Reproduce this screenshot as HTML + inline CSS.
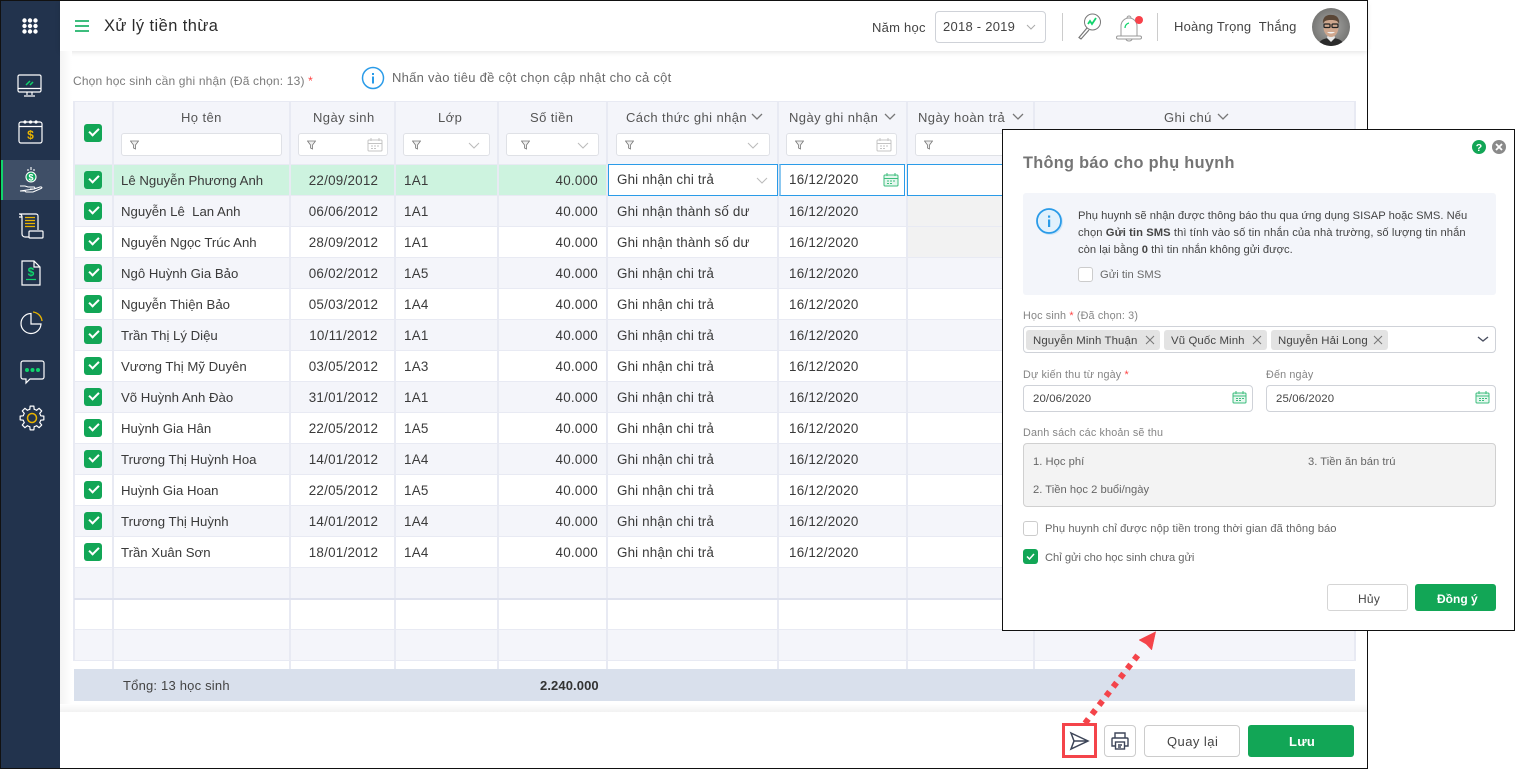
<!DOCTYPE html>
<html lang="vi"><head><meta charset="utf-8"><title>Xử lý tiền thừa</title>
<style>
html,body{margin:0;padding:0;background:#fff}
#p{position:relative;width:1515px;height:769px;overflow:hidden;background:#fff;font-family:"Liberation Sans","DejaVu Sans",sans-serif;font-size:13px;color:#333}
.a{position:absolute;box-sizing:border-box}
.t{position:absolute;white-space:pre;height:20px;line-height:20px;letter-spacing:.25px}
table{position:absolute;left:73px;top:101px;border-collapse:collapse;table-layout:fixed;width:1281px}
td,th{border:1px solid #e8eaf3;border-width:1px 2px;padding:0 8px;height:31px;box-sizing:border-box;white-space:pre;font-weight:400;font-size:13.4px;letter-spacing:.25px;color:#3a3a3a;overflow:hidden}
tr:nth-child(odd) td{background:#f4f5fa}
tr.o td{background:#fff}
td.r{text-align:right}td.c{text-align:center;padding:0}
td.d{padding-left:10px}
td:nth-child(1){padding-right:2px}
td:nth-child(2){padding-left:7px;font-size:13.2px;letter-spacing:0}
td:nth-child(3){padding-left:2px}
td:nth-child(6){padding-left:9px;letter-spacing:.15px}
.ck{display:inline-block;width:18px;height:18px;background:#12a656;border-radius:3px;vertical-align:middle;position:relative}
.ck:after{content:"";position:absolute;left:5px;top:4px;width:8px;height:4px;border:solid #fff;border-width:0 0 2px 2px;transform:rotate(-45deg)}
.box{position:absolute;background:#fff;border:1px solid #dfe1e6;border-radius:3px;box-sizing:border-box;height:23px;top:133px}
.m{font-size:11.4px;color:#444;letter-spacing:.12px;transform:translateY(1px)}
.pp{font-size:11.2px;color:#444;letter-spacing:.02px;transform:translateY(1px)}
.lb{font-size:10.8px;color:#858585;letter-spacing:.15px;transform:translateY(1px)}
.hd{color:#555;letter-spacing:.42px;top:108px}
.inp{position:absolute;background:#fff;border:1px solid #cfd2d8;border-radius:4px;box-sizing:border-box}
.tag{position:absolute;top:330px;height:20px;background:#e3e3e3;border-radius:3px}
</style></head><body><div id="p">

<!-- sidebar -->
<div class="a" style="left:0;top:0;width:60px;height:769px;background:#22334d"></div>
<div class="a" style="left:1px;top:160px;width:59px;height:40px;background:#3f4f67"></div>
<div class="a" style="left:1px;top:160px;width:2px;height:40px;background:#10d46c"></div>

<!-- header -->
<div class="a" style="left:60px;top:1px;width:1307px;height:50px;background:#fff;box-shadow:0 1px 5px rgba(0,0,0,.12)"></div>
<div class="a" style="left:60px;top:51px;width:12px;height:661px;background:linear-gradient(90deg,#f4f4f4,#fff)"></div>
<div class="a" style="left:60px;top:704px;width:1307px;height:8px;background:linear-gradient(180deg,#fff,#f2f2f2)"></div>
<div class="a" style="left:75px;top:20px;width:14px;height:2px;background:#3dbd7d;box-shadow:0 5px 0 #3dbd7d,0 10px 0 #3dbd7d"></div>
<div class="t" style="left:104px;top:16px;font-size:16.4px;color:#2b2b2b;letter-spacing:.45px">Xử lý tiền thừa</div>
<div class="t" style="left:872px;top:18px;color:#444;font-size:13px">Năm học</div>
<div class="inp" style="left:935px;top:11px;width:111px;height:32px"></div>
<div class="t" style="left:943px;top:17px;color:#444;font-size:13px">2018 - 2019</div>
<svg class="a" style="left:1026px;top:24px" width="10" height="6"><path d="M1 1l4 4 4-4" fill="none" stroke="#aaa"/></svg>
<div class="a" style="left:1062px;top:13px;width:1px;height:28px;background:#ccc"></div>
<div class="a" style="left:1157px;top:13px;width:1px;height:28px;background:#ccc"></div>
<svg class="a" style="left:1076px;top:12px" width="28" height="30" fill="none"><circle cx="16.500" cy="10" r="8" stroke="#777"/><path d="M11 16L3 25.500l2 1.500 8-9" stroke="#777" stroke-width="1.200"/><path d="M12 12l2-3 2 3 4-6" stroke="#10d46c" stroke-width="1.800"/></svg>
<svg class="a" style="left:1115px;top:12px" width="30" height="30" fill="none"><path d="M6 24V14a8 8 0 0 1 16 0v10M3 24h22a1 1 0 0 1 0 3H3a1 1 0 0 1 0-3zM12 6a2 2 0 0 1 4 0M11 27a3 2 0 0 0 6 0" stroke="#999"/><path d="M10 16a5 5 0 0 1 4-5" stroke="#10d46c" stroke-width="1.300"/><circle cx="24" cy="8" r="4" fill="#f8414a"/></svg>
<div class="t" style="left:1174px;top:17px;color:#444;font-size:13px;letter-spacing:.2px">Hoàng Trọng  Thắng</div>
<svg class="a" style="left:1312px;top:8px" width="38" height="38"><defs><clipPath id="av"><circle cx="19" cy="19" r="19"/></clipPath><radialGradient id="bgv"><stop offset="0" stop-color="#a8a8a6"/><stop offset="1" stop-color="#777775"/></radialGradient></defs><g clip-path="url(#av)"><rect width="38" height="38" fill="url(#bgv)"/><path d="M6 38c1-6 6-8 13-8s12 2 13 8z" fill="#2b2b2b"/><path d="M15 30l4 4 4-4-1-4h-6z" fill="#e8e8e8"/><ellipse cx="19" cy="19" rx="7.500" ry="10" fill="#cfa78e"/><path d="M11 16c-1-7 4-10 9-9 5 0 8 4 7 9-1-3-3-4-8-4s-7 1-8 4z" fill="#5a4636"/><rect x="12" y="16" width="6" height="3.500" rx="1" fill="none" stroke="#222" stroke-width="1.200"/><rect x="20" y="16" width="6" height="3.500" rx="1" fill="none" stroke="#222" stroke-width="1.200"/><path d="M15 24c2 2 6 2 8 0z" fill="#f4f4f4"/></g></svg>

<!-- sub header -->
<div class="t" style="left:73px;top:71px;font-size:12px;color:#7b7b7b;letter-spacing:.17px">Chọn học sinh cần ghi nhận (Đã chọn: 13) <span style="color:#f44">*</span></div>
<svg class="a" style="left:361px;top:66px" width="24" height="24"><circle cx="12" cy="12" r="10.500" fill="#fff" stroke="#2a9be8" stroke-width="1.500"/><rect x="11" y="10.500" width="2" height="7" fill="#2a9be8"/><rect x="11" y="7" width="2" height="2" fill="#2a9be8"/></svg>
<div class="t" style="left:392px;top:68px;font-size:13px;color:#6a6a6a;letter-spacing:.27px">Nhấn vào tiêu đề cột chọn cập nhật cho cả cột</div>

<!-- table -->
<table>
<colgroup><col style="width:39px"><col style="width:177px"><col style="width:105px"><col style="width:103px"><col style="width:109px"><col style="width:171px"><col style="width:129px"><col style="width:127px"><col style="width:321px"></colgroup>
<tbody>
<tr style="height:63px"><td style="background:#f4f5fa;height:63px" class="c"><span class="ck"></span></td><td style="background:#f4f5fa"></td><td style="background:#f4f5fa"></td><td style="background:#f4f5fa"></td><td style="background:#f4f5fa"></td><td style="background:#f4f5fa"></td><td style="background:#f4f5fa"></td><td style="background:#f4f5fa"></td><td style="background:#f4f5fa"></td></tr>
<tr class="o"><td class="c" style="background:#cdf3df"><span class="ck"></span></td><td style="background:#cdf3df">Lê Nguyễn Phương Anh</td><td class="c" style="background:#cdf3df">22/09/2012</td><td style="background:#cdf3df">1A1</td><td class="r" style="background:#cdf3df">40.000</td><td></td><td></td><td></td><td style="background:#fff"></td></tr>
<tr><td class="c"><span class="ck"></span></td><td>Nguyễn Lê  Lan Anh</td><td class="c">06/06/2012</td><td>1A1</td><td class="r">40.000</td><td>Ghi nhận thành số dư</td><td class="d">16/12/2020</td><td style="background:#f2f2f2"></td><td></td></tr>
<tr class="o"><td class="c"><span class="ck"></span></td><td>Nguyễn Ngọc Trúc Anh</td><td class="c">28/09/2012</td><td>1A1</td><td class="r">40.000</td><td>Ghi nhận thành số dư</td><td class="d">16/12/2020</td><td style="background:#f2f2f2"></td><td></td></tr>
<tr><td class="c"><span class="ck"></span></td><td>Ngô Huỳnh Gia Bảo</td><td class="c">06/02/2012</td><td>1A5</td><td class="r">40.000</td><td>Ghi nhận chi trả</td><td class="d">16/12/2020</td><td></td><td></td></tr>
<tr class="o"><td class="c"><span class="ck"></span></td><td>Nguyễn Thiện Bảo</td><td class="c">05/03/2012</td><td>1A4</td><td class="r">40.000</td><td>Ghi nhận chi trả</td><td class="d">16/12/2020</td><td></td><td></td></tr>
<tr><td class="c"><span class="ck"></span></td><td>Trần Thị Lý Diệu</td><td class="c">10/11/2012</td><td>1A1</td><td class="r">40.000</td><td>Ghi nhận chi trả</td><td class="d">16/12/2020</td><td></td><td></td></tr>
<tr class="o"><td class="c"><span class="ck"></span></td><td>Vương Thị Mỹ Duyên</td><td class="c">03/05/2012</td><td>1A3</td><td class="r">40.000</td><td>Ghi nhận chi trả</td><td class="d">16/12/2020</td><td></td><td></td></tr>
<tr><td class="c"><span class="ck"></span></td><td>Võ Huỳnh Anh Đào</td><td class="c">31/01/2012</td><td>1A1</td><td class="r">40.000</td><td>Ghi nhận chi trả</td><td class="d">16/12/2020</td><td></td><td></td></tr>
<tr class="o"><td class="c"><span class="ck"></span></td><td>Huỳnh Gia Hân</td><td class="c">22/05/2012</td><td>1A5</td><td class="r">40.000</td><td>Ghi nhận chi trả</td><td class="d">16/12/2020</td><td></td><td></td></tr>
<tr><td class="c"><span class="ck"></span></td><td>Trương Thị Huỳnh Hoa</td><td class="c">14/01/2012</td><td>1A4</td><td class="r">40.000</td><td>Ghi nhận chi trả</td><td class="d">16/12/2020</td><td></td><td></td></tr>
<tr class="o"><td class="c"><span class="ck"></span></td><td>Huỳnh Gia Hoan</td><td class="c">22/05/2012</td><td>1A5</td><td class="r">40.000</td><td>Ghi nhận chi trả</td><td class="d">16/12/2020</td><td></td><td></td></tr>
<tr><td class="c"><span class="ck"></span></td><td>Trương Thị Huỳnh</td><td class="c">14/01/2012</td><td>1A4</td><td class="r">40.000</td><td>Ghi nhận chi trả</td><td class="d">16/12/2020</td><td></td><td></td></tr>
<tr class="o"><td class="c"><span class="ck"></span></td><td>Trần Xuân Sơn</td><td class="c">18/01/2012</td><td>1A4</td><td class="r">40.000</td><td>Ghi nhận chi trả</td><td class="d">16/12/2020</td><td></td><td></td></tr>
<tr><td></td><td></td><td></td><td></td><td></td><td></td><td></td><td></td><td></td></tr>
<tr class="o"><td></td><td></td><td></td><td></td><td></td><td></td><td></td><td></td><td></td></tr>
<tr><td></td><td></td><td></td><td></td><td></td><td></td><td></td><td></td><td></td></tr>
</tbody></table>
<div class="a" style="left:74px;top:598px;width:1281px;height:2px;background:#dfe2ee"></div>
<div class="a" style="left:112px;top:660px;width:2px;height:9px;background:#e8eaf3;box-shadow:177px 0 #e8eaf3,282px 0 #e8eaf3,385px 0 #e8eaf3,494px 0 #e8eaf3,665px 0 #e8eaf3,794px 0 #e8eaf3,921px 0 #e8eaf3"></div>

<!-- table head text -->
<div class="t hd" style="left:181px">Họ tên</div>
<div class="t hd" style="left:313px">Ngày sinh</div>
<div class="t hd" style="left:438px">Lớp</div>
<div class="t hd" style="left:530px">Số tiền</div>
<div class="t hd" style="left:626px">Cách thức ghi nhận</div>
<div class="t hd" style="left:789px">Ngày ghi nhận</div>
<div class="t hd" style="left:918px">Ngày hoàn trả</div>
<div class="t hd" style="left:1164px">Ghi chú</div>
<svg class="a" style="left:751px;top:113px" width="12" height="8"><path d="M1 1l5 5 5-5" fill="none" stroke="#777" stroke-width="1.300"/></svg>
<svg class="a" style="left:884px;top:113px" width="12" height="8"><path d="M1 1l5 5 5-5" fill="none" stroke="#777" stroke-width="1.300"/></svg>
<svg class="a" style="left:1012px;top:113px" width="12" height="8"><path d="M1 1l5 5 5-5" fill="none" stroke="#777" stroke-width="1.300"/></svg>
<svg class="a" style="left:1217px;top:113px" width="12" height="8"><path d="M1 1l5 5 5-5" fill="none" stroke="#777" stroke-width="1.300"/></svg>

<!-- filters -->
<div class="box" style="left:121px;width:161px"></div>
<div class="box" style="left:298px;width:90px"></div>
<div class="box" style="left:403px;width:87px"></div>
<div class="box" style="left:506px;width:93px"></div>
<div class="box" style="left:616px;width:154px"></div>
<div class="box" style="left:786px;width:111px"></div>
<div class="box" style="left:915px;width:111px"></div>
<svg class="a" style="left:130px;top:140px" width="9" height="10"><path d="M.5 1h8L5.500 5v4L3.500 8V5z" fill="#eee" stroke="#777" stroke-width=".8"/></svg>
<svg class="a" style="left:307px;top:140px" width="9" height="10"><path d="M.5 1h8L5.500 5v4L3.500 8V5z" fill="#eee" stroke="#777" stroke-width=".8"/></svg>
<svg class="a" style="left:412px;top:140px" width="9" height="10"><path d="M.5 1h8L5.500 5v4L3.500 8V5z" fill="#eee" stroke="#777" stroke-width=".8"/></svg>
<svg class="a" style="left:521px;top:140px" width="9" height="10"><path d="M.5 1h8L5.500 5v4L3.500 8V5z" fill="#eee" stroke="#777" stroke-width=".8"/></svg>
<svg class="a" style="left:625px;top:140px" width="9" height="10"><path d="M.5 1h8L5.500 5v4L3.500 8V5z" fill="#eee" stroke="#777" stroke-width=".8"/></svg>
<svg class="a" style="left:795px;top:140px" width="9" height="10"><path d="M.5 1h8L5.500 5v4L3.500 8V5z" fill="#eee" stroke="#777" stroke-width=".8"/></svg>
<svg class="a" style="left:924px;top:140px" width="9" height="10"><path d="M.5 1h8L5.500 5v4L3.500 8V5z" fill="#eee" stroke="#777" stroke-width=".8"/></svg>
<svg class="a" style="left:468px;top:142px" width="12" height="7"><path d="M1 1l5 5 5-5" fill="none" stroke="#bbb"/></svg>
<svg class="a" style="left:577px;top:142px" width="12" height="7"><path d="M1 1l5 5 5-5" fill="none" stroke="#bbb"/></svg>
<svg class="a" style="left:747px;top:142px" width="12" height="7"><path d="M1 1l5 5 5-5" fill="none" stroke="#bbb"/></svg>
<svg class="a" style="left:367px;top:137px" width="16" height="16" fill="none" stroke="#c4c4c4"><rect x="1" y="3" width="14" height="11" rx="1"/><path d="M1 6.500h14M4 1v3M12 1v3M4 9h2M7 9h2M10 9h2M4 11.500h2M7 11.500h2"/></svg>
<svg class="a" style="left:876px;top:137px" width="16" height="16" fill="none" stroke="#c4c4c4"><rect x="1" y="3" width="14" height="11" rx="1"/><path d="M1 6.500h14M4 1v3M12 1v3M4 9h2M7 9h2M10 9h2M4 11.500h2M7 11.500h2"/></svg>

<!-- active row cells -->
<div class="a" style="left:608px;top:164px;width:170px;height:32px;background:#fff;border:1px solid #2a9be8"></div>
<div class="a" style="left:779px;top:164px;width:126px;height:32px;background:#fff;border:1px solid #2a9be8;border-left:2px solid #8cc8f0"></div>
<div class="a" style="left:907px;top:164px;width:130px;height:32px;background:#fff;border:1px solid #2a9be8"></div>
<div class="t" style="left:617px;top:170px;font-size:13.4px;color:#3a3a3a;letter-spacing:.15px">Ghi nhận chi trả</div>
<svg class="a" style="left:756px;top:177px" width="12" height="7"><path d="M1 1l5 5 5-5" fill="none" stroke="#bbb"/></svg>
<div class="t" style="left:789px;top:170px;font-size:13.4px;color:#3a3a3a">16/12/2020</div>
<svg class="a" style="left:883px;top:172px" width="16" height="16" fill="none" stroke="#3dbd7d"><rect x="1" y="3" width="14" height="11" rx="1" fill="#e5f7ee"/><path d="M1 6.500h14M4 1v3M12 1v3M4 9h2M7 9h2M10 9h2M4 11.500h2M7 11.500h2"/></svg>

<!-- totals -->
<div class="a" style="left:74px;top:669px;width:1281px;height:32px;background:#d9e0ec"></div>
<div class="t" style="left:123px;top:676px;color:#444;font-size:13px;letter-spacing:.2px">Tổng: 13 học sinh</div>
<div class="t" style="left:540px;top:676px;font-weight:700;color:#333;font-size:13px;letter-spacing:.1px">2.240.000</div>

<!-- bottom -->
<svg class="a" style="left:1069px;top:731px" width="21" height="20" fill="none" stroke="#3d4558" stroke-width="1.500"><path d="M2 2l17 8-17 8 3-8zM5 10h14"/></svg>
<div class="a" style="left:1062px;top:723px;width:35px;height:35px;border:3px solid #f4444a"></div>
<div class="a" style="left:1104px;top:725px;width:32px;height:32px;border:1px solid #ccc;border-radius:4px"></div>
<svg class="a" style="left:1110px;top:731px" width="20" height="20" fill="none" stroke="#3d4558" stroke-width="1.400"><path d="M5 7V2h10v5M5 15H2V8a1 1 0 0 1 1-1h14a1 1 0 0 1 1 1v7h-3"/><rect x="5.500" y="11" width="9" height="7"/><path d="M8 14h4M8 16h3"/></svg>
<div class="a" style="left:1144px;top:725px;width:96px;height:32px;border:1px solid #ccc;border-radius:4px"></div>
<div class="t" style="left:1167px;top:732px;color:#444;font-size:13px;letter-spacing:.45px">Quay lại</div>
<div class="a" style="left:1248px;top:725px;width:106px;height:32px;background:#12a656;border-radius:3px"></div>
<div class="t" style="left:1289px;top:732px;color:#fff;font-weight:700;font-size:13px">Lưu</div>

<!-- frame -->
<div class="a" style="left:0;top:0;width:1368px;height:769px;border:1px solid #111"></div>

<!-- sidebar icons -->
<svg class="a" style="left:22px;top:18px" width="16" height="16" fill="#fff"><circle cx="2.500" cy="2.500" r="2.200"/><circle cx="8" cy="2.500" r="2.200"/><circle cx="13.500" cy="2.500" r="2.200"/><circle cx="2.500" cy="8" r="2.200"/><circle cx="8" cy="8" r="2.200"/><circle cx="13.500" cy="8" r="2.200"/><circle cx="2.500" cy="13.500" r="2.200"/><circle cx="8" cy="13.500" r="2.200"/><circle cx="13.500" cy="13.500" r="2.200"/></svg>
<svg class="a" style="left:17px;top:74px" width="26" height="24" fill="none" stroke="#fff" stroke-width="1.200"><rect x="1" y="1" width="23" height="17" rx="1.500"/><path d="M1 14.500h23M10 18v3M15 18v3M7 22h11"/><path d="M9 11l4-4M13 11l3-3" stroke="#10d46c" stroke-width="1.500"/></svg>
<svg class="a" style="left:18px;top:119px" width="26" height="26" fill="none" stroke="#fff" stroke-width="1.200"><rect x="1" y="3" width="23" height="21" rx="2"/><path d="M1 7.500h23"/><circle cx="7" cy="3" r="1" fill="#fff"/><circle cx="12.500" cy="3" r="1" fill="#fff"/><circle cx="18" cy="3" r="1" fill="#fff"/><text x="12.500" y="20" text-anchor="middle" font-size="12" font-weight="700" fill="#e9b400" stroke="none" font-family="Liberation Sans">$</text></svg>
<svg class="a" style="left:19px;top:166px" width="26" height="30" fill="none" stroke="#fff" stroke-width="1.100"><circle cx="12" cy="11" r="5" fill="#10a860"/><text x="12" y="14.500" text-anchor="middle" font-size="9" font-weight="700" fill="#fff" stroke="none" font-family="Liberation Sans">$</text><path d="M12 1v3M9 3v2M15 3v2"/><path d="M1 20h5l3 1h6c1 0 1 2 0 2h-4m4 0l6-2c2-.5 2.500 1 1 1.500l-8 3.500H7l-1-1H1z"/></svg>
<svg class="a" style="left:18px;top:213px" width="26" height="27" fill="none" stroke="#fff" stroke-width="1.200"><path d="M1 1h17a2 2 0 0 1 2 2v14M1 1c2 0 3 1 3 3v0H1M4 3v18a3 3 0 0 0 3 3h11"/><rect x="11" y="18" width="14" height="7" rx="1" fill="#22334d"/><path d="M7 4.500h10M7 7.500h10M7 10.500h10M7 13.500h10" stroke="#e9b400"/></svg>
<svg class="a" style="left:21px;top:260px" width="20" height="26" fill="none" stroke="#fff" stroke-width="1.200"><path d="M1 1h12l6 6v18H1zM13 1v6h6"/><text x="10" y="16" text-anchor="middle" font-size="12" font-weight="700" fill="#10d46c" stroke="none" font-family="Liberation Sans">$</text><path d="M5 19.500h10" stroke="#10d46c"/></svg>
<svg class="a" style="left:20px;top:311px" width="24" height="24" fill="none" stroke="#fff" stroke-width="1.200"><path d="M11 2.500a10 10 0 1 0 10 10.500H11z"/><path d="M13 1a10 10 0 0 1 9 9" stroke="#e9b400" stroke-width="1.300"/></svg>
<svg class="a" style="left:20px;top:360px" width="25" height="26" fill="none" stroke="#fff" stroke-width="1.200"><path d="M3 1h19a2 2 0 0 1 2 2v14a2 2 0 0 1-2 2H10l-4 4v-4H3a2 2 0 0 1-2-2V3a2 2 0 0 1 2-2z"/><circle cx="7" cy="10" r="2" fill="#10d46c" stroke="none"/><circle cx="12.500" cy="10" r="2" fill="#10d46c" stroke="none"/><circle cx="18" cy="10" r="2" fill="#10d46c" stroke="none"/></svg>
<svg class="a" style="left:19px;top:405px" width="26" height="26" viewBox="-13 -13 26 26" fill="none" stroke="#fff" stroke-width="1.200" stroke-linejoin="round"><path id="gt" d="M-3.440-8.310L-2.180-8.730-1.880-11.850 1.880-11.850 2.180-8.730 3.440-8.310"/><use href="#gt" transform="rotate(45)"/><use href="#gt" transform="rotate(90)"/><use href="#gt" transform="rotate(135)"/><use href="#gt" transform="rotate(180)"/><use href="#gt" transform="rotate(225)"/><use href="#gt" transform="rotate(270)"/><use href="#gt" transform="rotate(315)"/><circle r="4.500" stroke="#e9b400" stroke-width="1.500"/></svg>

<!-- modal -->
<div class="a" style="left:1002px;top:129px;width:513px;height:502px;background:#fff;border:1px solid #111"></div>
<div class="t" style="left:1023px;top:153px;font-size:16.3px;font-weight:700;color:#757575;letter-spacing:.32px">Thông báo cho phụ huynh</div>
<svg class="a" style="left:1472px;top:140px" width="14" height="14"><circle cx="7" cy="7" r="7" fill="#12a656"/><text x="7" y="11" text-anchor="middle" font-size="10.500" font-weight="700" fill="#fff" font-family="Liberation Sans">?</text></svg>
<svg class="a" style="left:1492px;top:140px" width="14" height="14"><circle cx="7" cy="7" r="7" fill="#8a8a8a"/><path d="M4 4l6 6M10 4l-6 6" stroke="#fff" stroke-width="1.800"/></svg>
<div class="a" style="left:1023px;top:193px;width:473px;height:102px;background:#f3f5fa;border-radius:3px"></div>
<svg class="a" style="left:1035px;top:207px" width="29" height="29"><circle cx="15" cy="15" r="13" fill="#cfe6f8"/><circle cx="14" cy="14" r="12" fill="#e2f1fc" stroke="#2a9be8" stroke-width="1.800"/><rect x="13" y="12.500" width="2.200" height="7.500" fill="#2a9be8"/><rect x="13" y="8.500" width="2.200" height="2.200" fill="#2a9be8"/></svg>
<div class="t pp" style="left:1078px;top:205px">Phụ huynh sẽ nhận được thông báo thu qua ứng dụng SISAP hoặc SMS. Nếu</div>
<div class="t pp" style="left:1078px;top:222px;letter-spacing:.08px">chọn <b>Gửi tin SMS</b> thì tính vào số tin nhắn của nhà trường, số lượng tin nhắn</div>
<div class="t pp" style="left:1078px;top:239px">còn lại bằng <b>0</b> thì tin nhắn không gửi được.</div>
<div class="a" style="left:1078px;top:267px;width:15px;height:15px;background:#fff;border:1px solid #ccc;border-radius:3px"></div>
<div class="t pp" style="left:1100px;top:264px;color:#6a6a6a">Gửi tin SMS</div>

<div class="t lb" style="left:1023px;top:305px">Học sinh <span style="color:#f44">*</span> (Đã chọn: 3)</div>
<div class="inp" style="left:1023px;top:326px;width:473px;height:27px"></div>
<div class="tag" style="left:1026px;width:134px"></div>
<div class="tag" style="left:1164px;width:103px"></div>
<div class="tag" style="left:1271px;width:117px"></div>
<div class="t m" style="left:1033px;top:330px;color:#444">Nguyễn Minh Thuận</div>
<div class="t m" style="left:1171px;top:330px;color:#444">Vũ Quốc Minh</div>
<div class="t m" style="left:1278px;top:330px;color:#444">Nguyễn Hải Long</div>
<svg class="a" style="left:1145px;top:335px" width="10" height="10"><path d="M1 1l8 8M9 1l-8 8" stroke="#777"/></svg>
<svg class="a" style="left:1252px;top:335px" width="10" height="10"><path d="M1 1l8 8M9 1l-8 8" stroke="#777"/></svg>
<svg class="a" style="left:1373px;top:335px" width="10" height="10"><path d="M1 1l8 8M9 1l-8 8" stroke="#777"/></svg>
<svg class="a" style="left:1477px;top:336px" width="12" height="7"><path d="M1 1l5 4 5-4" fill="none" stroke="#4a4f60" stroke-width="1.400"/></svg>

<div class="t lb" style="left:1023px;top:364px">Dự kiến thu từ ngày <span style="color:#f44">*</span></div>
<div class="t lb" style="left:1266px;top:364px">Đến ngày</div>
<div class="inp" style="left:1023px;top:385px;width:230px;height:27px"></div>
<div class="inp" style="left:1266px;top:385px;width:230px;height:27px"></div>
<div class="t m" style="left:1033px;top:388px">20/06/2020</div>
<div class="t m" style="left:1276px;top:388px">25/06/2020</div>
<svg class="a" style="left:1232px;top:390px" width="15" height="15" fill="none" stroke="#3dbd7d"><rect x="1" y="3" width="13" height="10" rx="1" fill="#e5f7ee"/><path d="M1 6h13M4 1v3M11 1v3M4 8.500h2M7 8.500h2M10 8.500h2M4 10.500h2M7 10.500h2"/></svg>
<svg class="a" style="left:1475px;top:390px" width="15" height="15" fill="none" stroke="#3dbd7d"><rect x="1" y="3" width="13" height="10" rx="1" fill="#e5f7ee"/><path d="M1 6h13M4 1v3M11 1v3M4 8.500h2M7 8.500h2M10 8.500h2M4 10.500h2M7 10.500h2"/></svg>

<div class="t lb" style="left:1023px;top:422px">Danh sách các khoản sẽ thu</div>
<div class="a" style="left:1023px;top:443px;width:473px;height:64px;background:#f3f3f3;border:1px solid #d0d0d0;border-radius:4px"></div>
<div class="t pp" style="left:1033px;top:451px;color:#666">1. Học phí</div>
<div class="t pp" style="left:1308px;top:451px;color:#666">3. Tiền ăn bán trú</div>
<div class="t pp" style="left:1033px;top:479px;color:#666">2. Tiền học 2 buổi/ngày</div>
<div class="a" style="left:1023px;top:521px;width:15px;height:15px;background:#fff;border:1px solid #ccc;border-radius:3px"></div>
<div class="t pp" style="left:1045px;top:518px;color:#666;letter-spacing:.08px">Phụ huynh chỉ được nộp tiền trong thời gian đã thông báo</div>
<div class="a" style="left:1023px;top:549px;width:15px;height:15px;background:#12a656;border-radius:3px"></div>
<svg class="a" style="left:1026px;top:553px" width="9" height="7"><path d="M1 3.500l2.500 2.500L8 1" fill="none" stroke="#fff" stroke-width="1.500"/></svg>
<div class="t pp" style="left:1045px;top:547px;color:#666;letter-spacing:-.02px">Chỉ gửi cho học sinh chưa gửi</div>
<div class="a" style="left:1327px;top:584px;width:81px;height:27px;border:1px solid #d5d5d5;border-radius:3px;background:#fff"></div>
<div class="t" style="left:1358px;top:589px;font-size:12px;color:#444">Hủy</div>
<div class="a" style="left:1415px;top:584px;width:81px;height:27px;background:#12a656;border-radius:3px"></div>
<div class="t" style="left:1437px;top:589px;font-size:12px;font-weight:700;color:#fff;letter-spacing:0">Đồng ý</div>

<!-- arrow -->
<svg class="a" style="left:1060px;top:625px" width="110" height="105"><path d="M25 98.300L78 30" stroke="#f4444a" stroke-width="6" stroke-dasharray="5.500 6" fill="none"/><path d="M95.700 6.700L79 15l7 4 5.700 6z" fill="#f4444a" stroke="#f4444a" stroke-width=".5"/></svg>

</div></body></html>
